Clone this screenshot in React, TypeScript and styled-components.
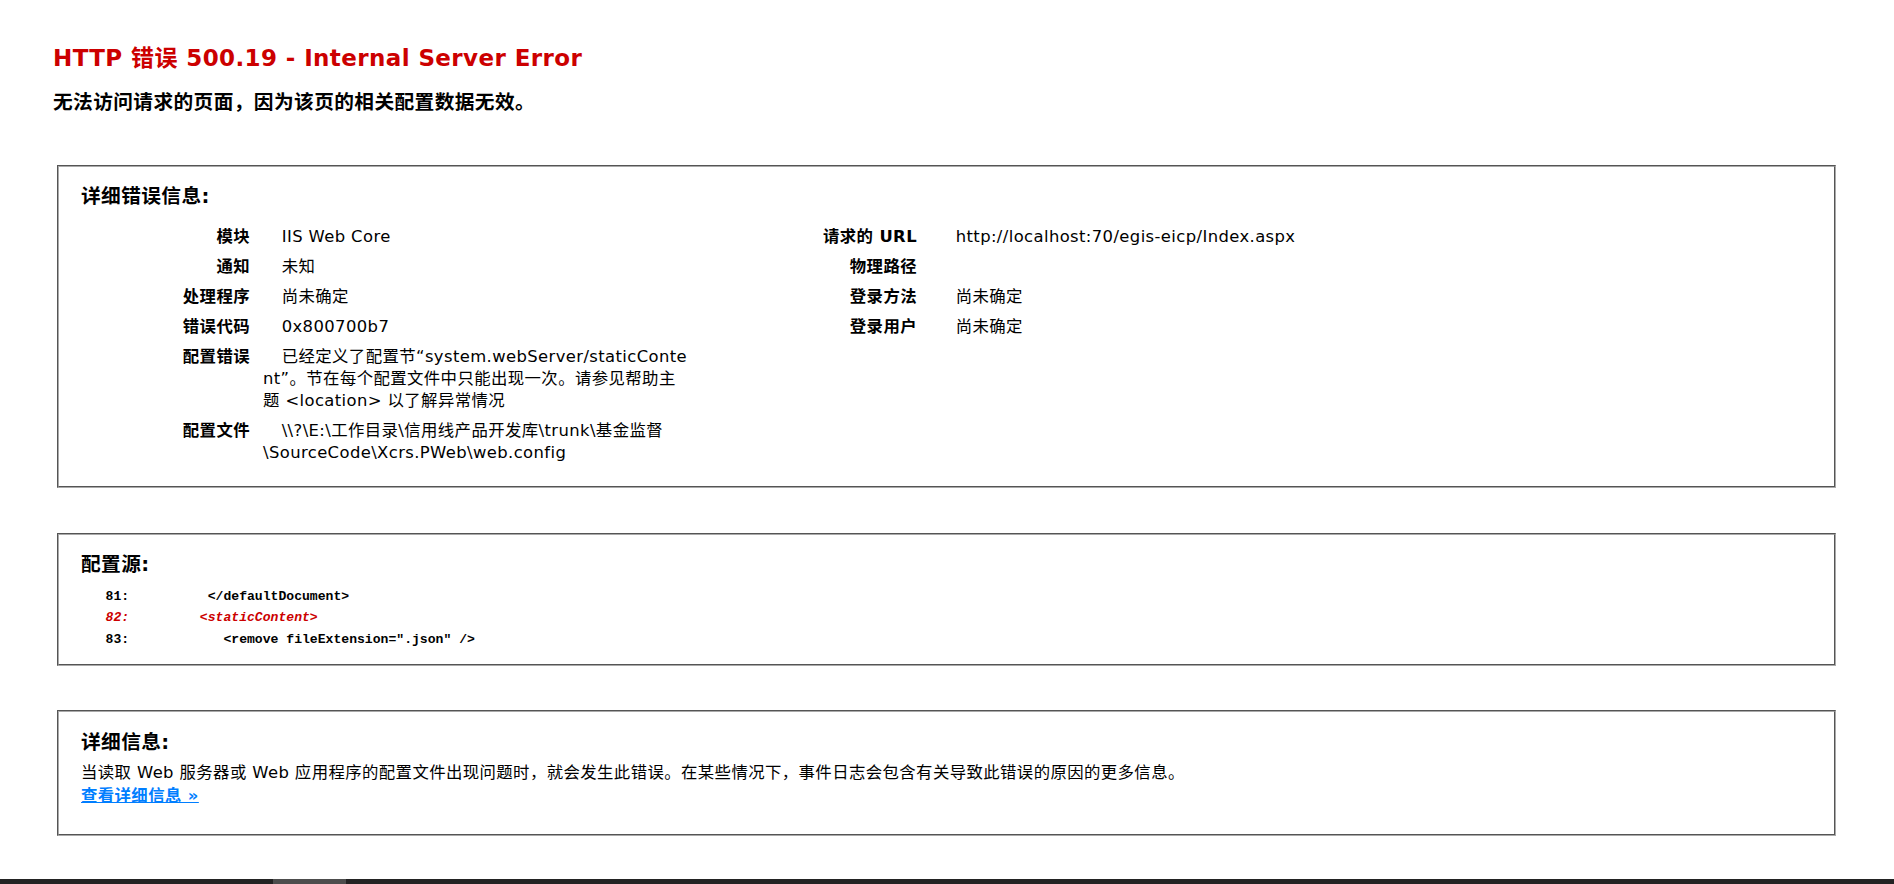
import React from "react";
import styled, { createGlobalStyle } from "styled-components";

const GlobalStyle = createGlobalStyle`
  html, body { margin: 0; padding: 0; background: #ffffff; }
  body {
    font-family: "DejaVu Sans", "Noto Sans CJK SC", sans-serif;
    font-size: 16.4px;
    letter-spacing: 0.4px;
    color: #000000;
  }
`;

const Page = styled.main`
  padding: 44px 0 40px;
`;

const Header = styled.header`
  padding-left: 53px;
`;

const Title = styled.h3`
  margin: 0;
  font-size: 23px;
  line-height: 28px;
  font-weight: bold;
  color: #cc0000;
`;

const Subtitle = styled.h4`
  margin: 19px 0 0;
  font-size: 19.7px;
  line-height: 24px;
  font-weight: bold;
`;

const Panel = styled.section<{ $top: number; $pt: number; $pb: number }>`
  margin: ${(p) => p.$top}px 58px 0 57px;
  border: 2px groove #a9a9a9;
  padding: ${(p) => p.$pt}px 21px ${(p) => p.$pb}px 21px;
`;

const PanelTitle = styled.h4`
  margin: 0;
  padding-left: 1px;
  font-size: 19.7px;
  line-height: 24px;
  font-weight: bold;
`;

const Details = styled.div`
  display: flex;
  align-items: flex-start;
  margin-top: 13.3px;
`;

const DetailTable = styled.dl<{ $width: number; $label: number; $gap: number }>`
  margin: 0;
  width: ${(p) => p.$width}px;
  display: grid;
  grid-template-columns: ${(p) => p.$label}px 1fr;
  column-gap: ${(p) => p.$gap}px;
`;

const Label = styled.dt`
  margin: 0;
  padding: 4.2px 0;
  line-height: 21.7px;
  text-align: right;
  font-weight: bold;
  white-space: nowrap;
`;

const Value = styled.dd`
  margin: 0;
  padding: 4.2px 0;
  line-height: 21.7px;
  text-indent: 18.7px;
  white-space: nowrap;
`;

const Spacer = styled.div`
  width: 35px;
  flex: none;
`;

const CodeBlock = styled.pre`
  margin: 9.3px 0 0;
  padding-left: 2px;
  font-family: "Liberation Mono", "Noto Sans CJK SC", monospace;
  font-size: 13.1px;
  font-weight: bold;
  letter-spacing: 0;
  line-height: 21.5px;
`;

const CodeLine = styled.span<{ $highlight?: boolean }>`
  display: block;
  color: ${(p) => (p.$highlight ? "#cc0000" : "#000000")};
  font-style: ${(p) => (p.$highlight ? "italic" : "normal")};
`;

const Paragraph = styled.p`
  margin: 6.8px 0 0;
  padding-left: 1px;
  line-height: 23px;
`;

const MoreLink = styled.a`
  display: inline-block;
  padding-left: 1px;
  line-height: 23px;
  color: #007eff;
  font-weight: bold;
  text-decoration: underline;
`;

const ScrollTrack = styled.div`
  position: fixed;
  left: 0;
  right: 0;
  bottom: 0;
  height: 5px;
  background: #232323;
`;

const ScrollThumb = styled.div`
  position: absolute;
  top: 0;
  bottom: 0;
  left: 273px;
  width: 73px;
  background: #4d4d4d;
`;

const leftRows: { label: string; lines: string[] }[] = [
  { label: "模块", lines: ["IIS Web Core"] },
  { label: "通知", lines: ["未知"] },
  { label: "处理程序", lines: ["尚未确定"] },
  { label: "错误代码", lines: ["0x800700b7"] },
  {
    label: "配置错误",
    lines: [
      "已经定义了配置节“system.webServer/staticConte",
      "nt”。节在每个配置文件中只能出现一次。请参见帮助主",
      "题 <location> 以了解异常情况",
    ],
  },
  {
    label: "配置文件",
    lines: [
      "\\\\?\\E:\\工作目录\\信用线产品开发库\\trunk\\基金监督",
      "\\SourceCode\\Xcrs.PWeb\\web.config",
    ],
  },
];

const rightRows: { label: string; lines: string[] }[] = [
  { label: "请求的 URL", lines: ["http://localhost:70/egis-eicp/Index.aspx"] },
  { label: "物理路径", lines: [""] },
  { label: "登录方法", lines: ["尚未确定"] },
  { label: "登录用户", lines: ["尚未确定"] },
];

const renderRows = (rows: { label: string; lines: string[] }[]) =>
  rows.map((r) => (
    <React.Fragment key={r.label}>
      <Label>{r.label}</Label>
      <Value>
        {r.lines.map((l, i) => (
          <React.Fragment key={i}>
            {i > 0 && <br />}
            {l}
          </React.Fragment>
        ))}
      </Value>
    </React.Fragment>
  ));

export default function App() {
  return (
    <>
      <GlobalStyle />
      <Page>
        <Header>
          <Title>HTTP 错误 500.19 - Internal Server Error</Title>
          <Subtitle>无法访问请求的页面，因为该页的相关配置数据无效。</Subtitle>
        </Header>

        <Panel $top={50} $pt={17.7} $pb={18.3}>
          <PanelTitle>详细错误信息:</PanelTitle>
          <Details>
            <DetailTable $width={606} $label={170} $gap={13}>
              {renderRows(leftRows)}
            </DetailTable>
            <Spacer />
            <DetailTable $width={1092} $label={196} $gap={20}>
              {renderRows(rightRows)}
            </DetailTable>
          </Details>
        </Panel>

        <Panel $top={45} $pt={17.7} $pb={13.5}>
          <PanelTitle>配置源:</PanelTitle>
          <CodeBlock>
            <CodeLine>{"   81:          </defaultDocument>"}</CodeLine>
            <CodeLine $highlight>{"   82:         <staticContent>"}</CodeLine>
            <CodeLine>{'   83:            <remove fileExtension=".json" />'}</CodeLine>
          </CodeBlock>
        </Panel>

        <Panel $top={44} $pt={18.7} $pb={26.5}>
          <PanelTitle>详细信息:</PanelTitle>
          <Paragraph>
            当读取 Web 服务器或 Web 应用程序的配置文件出现问题时，就会发生此错误。在某些情况下，事件日志会包含有关导致此错误的原因的更多信息。
          </Paragraph>
          <MoreLink href="#">查看详细信息 »</MoreLink>
        </Panel>
      </Page>
      <ScrollTrack>
        <ScrollThumb />
      </ScrollTrack>
    </>
  );
}
